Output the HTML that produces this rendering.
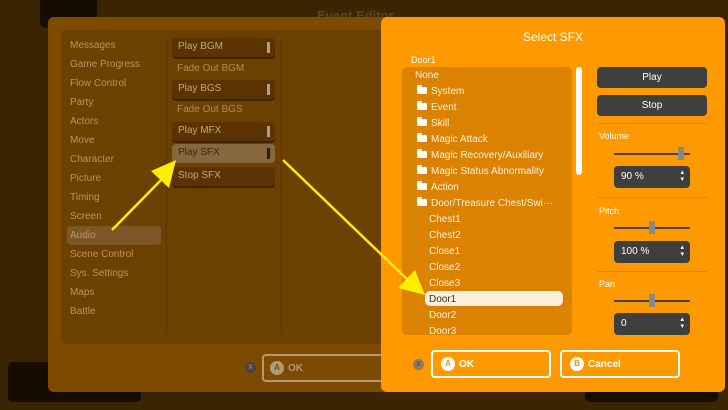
<!DOCTYPE html><html><head><style>
*{margin:0;padding:0;box-sizing:border-box}
body{width:728px;height:410px;overflow:hidden;background:#3b2500;font-family:"Liberation Sans",sans-serif;position:relative;font-size:10px}
.a{position:absolute}
.cat{position:absolute;left:70px;color:#bb9260;font-size:10px}
.cmd{position:absolute;left:172px;width:103px;height:19px;background:#5a3300;border-radius:4px;box-shadow:0 2px 0 #3e2300;color:#c9a678;padding:3px 6px;font-size:10px}
.cmd i{position:absolute;right:5px;top:4px;width:3px;height:11px;background:#a89e94}
.ft{position:absolute;left:177px;color:#b48a52;font-size:10px}
.it{position:absolute;font-size:10px;color:#fff3e0}
.fold{display:inline-block;width:10px;height:7px;background:#fff;border-radius:1px;margin-right:4px;position:relative;top:0px}
.fold:before{content:"";position:absolute;left:0;top:-2px;width:5px;height:2px;background:#fff;border-radius:1px 1px 0 0}
.btn{position:absolute;left:597px;width:110px;height:21px;background:#3f3f3f;border-radius:4px;color:#fff;text-align:center;line-height:21px;font-size:10px}
.lab{position:absolute;left:599px;color:#fff;font-size:9px}
.sl{position:absolute;left:614px;width:76px;height:2px;background:#444}
.th{position:absolute;width:6px;height:13px;background:#888;top:-6px}
.inp{position:absolute;left:614px;width:76px;height:22px;background:#3f3f3f;border-radius:4px;color:#fff;font-size:10px;padding:5px 7px}
.inp:after{content:"▴\A▾";white-space:pre;position:absolute;right:6px;top:3px;font-size:7px;line-height:7px}
.hr{position:absolute;left:597px;width:111px;height:1px;background:#e08600}
.ob{position:absolute;height:28px;border:2px solid #fff;border-radius:4px;color:#fff;font-size:10px;font-weight:bold;padding:0 8px;display:flex;align-items:center}
.ob b{display:inline-block;width:14px;height:14px;border-radius:7px;background:#fff;color:#f59300;text-align:center;line-height:14px;font-size:8px;margin-right:4px}
</style></head><body>
<div class="a" style="left:40px;top:-5px;width:57px;height:33px;background:#160d00;border-radius:5px"></div>
<div class="a" style="left:8px;top:362px;width:133px;height:40px;background:#160d00;border-radius:5px"></div>
<div class="a" style="left:585px;top:385px;width:133px;height:17px;background:#160d00;border-radius:5px"></div>
<div class="a" style="left:317px;top:8px;color:#5c4520;font-size:13px;font-weight:bold">Event Editor</div>
<div class="a" style="left:48px;top:17px;width:345px;height:375px;background:#7d4b00;border-radius:6px"></div>
<div class="a" style="left:61px;top:30px;width:330px;height:314px;background:#6c4100;border-radius:5px"></div>
<div class="a" style="left:166px;top:40px;width:1px;height:292px;background:#5a3500"></div>
<div class="a" style="left:281px;top:40px;width:1px;height:292px;background:#5a3500"></div>
<div class="a" style="left:67px;top:226px;width:94px;height:19px;background:#7b5626;border-radius:4px"></div>
<div class="cat" style="top:40px">Messages</div><div class="cat" style="top:59px">Game Progress</div><div class="cat" style="top:78px">Flow Control</div><div class="cat" style="top:97px">Party</div><div class="cat" style="top:116px">Actors</div><div class="cat" style="top:135px">Move</div><div class="cat" style="top:154px">Character</div><div class="cat" style="top:173px">Picture</div><div class="cat" style="top:192px">Timing</div><div class="cat" style="top:211px">Screen</div><div class="cat" style="top:230px">Audio</div><div class="cat" style="top:249px">Scene Control</div><div class="cat" style="top:268px">Sys. Settings</div><div class="cat" style="top:287px">Maps</div><div class="cat" style="top:306px">Battle</div>
<div class="cmd" style="top:38px">Play BGM<i></i></div>
<div class="ft" style="top:63px">Fade Out BGM</div>
<div class="cmd" style="top:80px">Play BGS<i></i></div>
<div class="ft" style="top:104px">Fade Out BGS</div>
<div class="cmd" style="top:122px">Play MFX<i></i></div>
<div class="cmd" style="top:144px;background:#86673e;box-shadow:none;color:#3a2a10">Play SFX<i style="background:#222"></i></div>
<div class="cmd" style="top:167px">Stop SFX</div>
<div class="a" style="left:245px;top:362px;width:11px;height:11px;border-radius:6px;background:#4a4340;color:#999;font-size:7px;text-align:center;line-height:11px">X</div>
<div class="a" style="left:262px;top:354px;width:130px;height:28px;border:2px solid #b39878;border-radius:4px;color:#b39878;font-size:10px;font-weight:bold;padding:0 6px;display:flex;align-items:center"><b style="display:inline-block;width:14px;height:14px;border-radius:7px;background:#b39878;color:#7d4b00;text-align:center;line-height:14px;font-size:8px;margin-right:4px">A</b>OK</div>
<div class="a" style="left:381px;top:17px;width:344px;height:375px;background:#fe9900;border-radius:6px"></div>
<div class="a" style="left:381px;top:30px;width:344px;text-align:center;color:#fff;font-size:12px">Select SFX</div>
<div class="a" style="left:411px;top:55px;color:#fff;font-size:9px">Door1</div>
<div class="a" style="left:402px;top:67px;width:170px;height:268px;background:#db8200;border-radius:5px"></div>
<div class="a" style="left:576px;top:67px;width:6px;height:108px;background:#fff;border-radius:3px"></div>
<div class="a" style="left:425px;top:291px;width:138px;height:15px;background:#fbeedc;border-radius:5px"></div>
<div class="it" style="left:415px;top:70px">None</div>
<div class="it" style="left:417px;top:86px"><span class="fold"></span>System</div>
<div class="it" style="left:417px;top:102px"><span class="fold"></span>Event</div>
<div class="it" style="left:417px;top:118px"><span class="fold"></span>Skill</div>
<div class="it" style="left:417px;top:134px"><span class="fold"></span>Magic Attack</div>
<div class="it" style="left:417px;top:150px"><span class="fold"></span>Magic Recovery/Auxiliary</div>
<div class="it" style="left:417px;top:166px"><span class="fold"></span>Magic Status Abnormality</div>
<div class="it" style="left:417px;top:182px"><span class="fold"></span>Action</div>
<div class="it" style="left:417px;top:198px"><span class="fold"></span>Door/Treasure Chest/Swi···</div>
<div class="it" style="left:429px;top:214px">Chest1</div>
<div class="it" style="left:429px;top:230px">Chest2</div>
<div class="it" style="left:429px;top:246px">Close1</div>
<div class="it" style="left:429px;top:262px">Close2</div>
<div class="it" style="left:429px;top:278px">Close3</div>
<div class="it" style="left:429px;top:294px;color:#333">Door1</div>
<div class="it" style="left:429px;top:310px">Door2</div>
<div class="it" style="left:429px;top:326px">Door3</div>
<div class="btn" style="top:67px">Play</div>
<div class="btn" style="top:95px">Stop</div>
<div class="hr" style="top:123px"></div>
<div class="lab" style="top:131px">Volume</div>
<div class="sl" style="top:153px"><div class="th" style="left:64px"></div></div>
<div class="inp" style="top:166px">90 %</div>
<div class="hr" style="top:197px"></div>
<div class="lab" style="top:206px">Pitch</div>
<div class="sl" style="top:227px"><div class="th" style="left:35px"></div></div>
<div class="inp" style="top:241px">100 %</div>
<div class="hr" style="top:271px"></div>
<div class="lab" style="top:279px">Pan</div>
<div class="sl" style="top:300px"><div class="th" style="left:35px"></div></div>
<div class="inp" style="top:313px">0</div>
<div class="a" style="left:413px;top:359px;width:11px;height:11px;border-radius:6px;background:#8a7a70;color:#444;font-size:7px;text-align:center;line-height:11px">X</div>
<div class="ob" style="left:431px;top:350px;width:120px"><b>A</b>OK</div>
<div class="ob" style="left:560px;top:350px;width:120px"><b>B</b>Cancel</div>
<svg class="a" style="left:0;top:0" width="728" height="410">
<line x1="112" y1="230" x2="163" y2="178" stroke="#ffee00" stroke-width="2.5"/>
<polygon points="176,160 169,188 151,171" fill="#ffee00"/>
<line x1="283" y1="160" x2="410" y2="282" stroke="#ffee00" stroke-width="2.5"/>
<polygon points="425,295 398,288 415,270" fill="#ffee00"/>
</svg>
</body></html>
